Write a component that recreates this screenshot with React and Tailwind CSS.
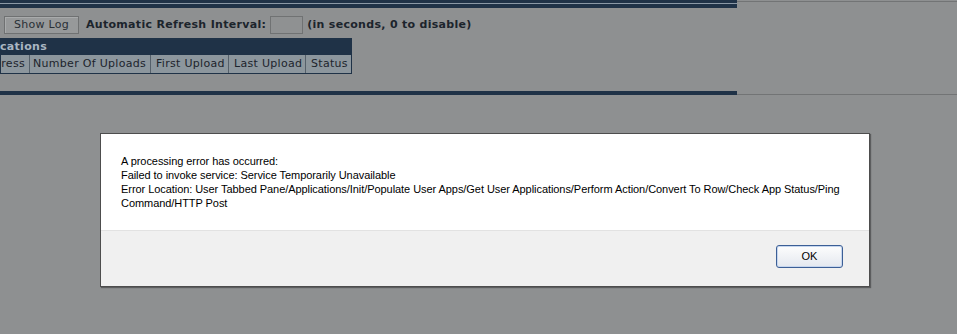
export default function App() {
  const cols = [
    { label: "ress", w: "w-[29px]", pad: "justify-end pr-[4px]" },
    { label: "Number Of Uploads", w: "w-[121px]", pad: "pl-[3px]" },
    { label: "First Upload", w: "w-[78px]", pad: "pl-[5px]" },
    { label: "Last Upload", w: "w-[77px]", pad: "pl-[5px]" },
    { label: "Status", w: "flex-1", pad: "pl-[5px]" },
  ];

  return (
    <div className="relative h-[334px] w-full overflow-hidden bg-[#8e9091] font-['DejaVu_Sans',sans-serif] text-[11px] tracking-[0.3px] text-[#1c242c]">
      {/* top bars */}
      <div className="flex h-[8px]">
        <div className="flex w-[737px] flex-col">
          <div className="h-[3px] bg-[#1f3247]" />
          <div className="h-px bg-[#8a98a6]" />
          <div className="h-[4px] bg-[#1f3247]" />
        </div>
        <div className="flex-1">
          <div className="mt-px h-px bg-[#727475]" />
        </div>
      </div>

      {/* toolbar */}
      <div className="mt-[8px] flex h-[18px] items-center">
        <button className="ml-[4px] h-[18px] w-[75px] border border-[#6f7172] bg-[#97999a] text-[11px] tracking-[0.3px] text-[#2a3036] shadow-[inset_1px_1px_0_#a9abac]">
          Show Log
        </button>
        <span className="ml-[7px] font-bold">Automatic Refresh Interval:</span>
        <div className="ml-[4px] h-[18px] w-[33px] border border-[#707273] bg-[#8f9192]" />
        <span className="ml-[4px] font-bold">(in seconds, 0 to disable)</span>
      </div>

      {/* table */}
      <div className="mt-[4px] w-[352px] border border-[#1f3247]">
        <div className="flex h-[16px] items-center bg-[#1f3247] font-bold text-[#a9b6c2]">
          <span className="-ml-px">cations</span>
        </div>
        <div className="flex h-[18px] bg-[#8c969d]">
          {cols.map((c, i) => (
            <div
              key={c.label}
              className={`${c.w} ${c.pad} flex items-center whitespace-nowrap border-[#55606a] ${i < cols.length - 1 ? "border-r" : ""}`}
            >
              {c.label}
            </div>
          ))}
        </div>
      </div>

      {/* bottom bar */}
      <div className="mt-[17px] flex h-[4px]">
        <div className="w-[737px] bg-[#1f3247]" />
        <div className="flex flex-1 flex-col justify-end">
          <div className="h-px bg-[#727475]" />
        </div>
      </div>

      {/* modal */}
      <div className="absolute left-[100px] top-[133px] flex h-[154px] w-[770px] flex-col border border-[#4d4d4d] font-['Liberation_Sans',Arial,sans-serif] text-[11px] tracking-[-0.06px] text-black shadow-[1px_1px_1px_rgba(0,0,0,0.35)]">
        <div className="h-[96px] bg-white pl-[20px] pr-[20px] pt-[20px] leading-[14px]">
          <p>A processing error has occurred:</p>
          <p>Failed to invoke service: Service Temporarily Unavailable</p>
          <p>
            Error Location: User Tabbed Pane/Applications/Init/Populate User Apps/Get User Applications/Perform
            Action/Convert To Row/Check App Status/Ping Command/HTTP Post
          </p>
        </div>
        <div className="flex flex-1 items-start justify-end border-t border-[#e2e2e2] bg-[#f0f0f0] pr-[26px] pt-[14px]">
          <button className="h-[23px] w-[67px] rounded-[3px] border border-[#3c5f96] bg-gradient-to-b from-[#fdfdfd] to-[#e4e8ef] text-[11px] text-black shadow-[inset_0_0_0_1px_#c6d6ee]">
            OK
          </button>
        </div>
      </div>
    </div>
  );
}
